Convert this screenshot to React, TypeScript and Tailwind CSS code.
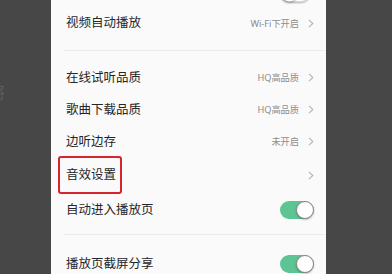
import { ReactNode } from "react";

const FONT = { fontFamily: '"Noto Sans", "Noto Sans CJK SC", sans-serif' };

const Chevron = () => (
  <svg width="6" height="9" viewBox="0 0 6 9" className="shrink-0">
    <polyline points="1,0.8 4.8,4.5 1,8.2" fill="none" stroke="#b4b4b4" strokeWidth="1.1" />
  </svg>
);

const Toggle = ({ on }: { on: boolean }) =>
  on ? (
    <div className="relative h-[18px] w-[34px] rounded-full bg-[#5cc593]">
      <div className="absolute right-0 top-1/2 h-[18px] w-[18px] -translate-y-1/2 rounded-full border border-[#8a8a8a] bg-white shadow-[0_1px_2px_rgba(0,0,0,0.25)]" />
    </div>
  ) : (
    <div className="relative h-[18px] w-[30px] rounded-full border border-[#dcdcdc] bg-white shadow-[0_1px_2px_rgba(0,0,0,0.3)]">
      <div className="absolute left-0 top-1/2 h-[17px] w-[17px] -translate-y-1/2 rounded-full bg-white shadow-[0_1px_2px_rgba(0,0,0,0.35)]" />
    </div>
  );

const Row = ({
  label,
  value,
  arrow,
  toggle,
  h,
}: {
  label: ReactNode;
  value?: string;
  arrow?: boolean;
  toggle?: boolean;
  h: string;
}) => (
  <div className={`flex shrink-0 items-center justify-between pl-[15px] pr-[12px] ${h}`}>
    <span className="text-[12.5px] leading-none text-[#262626]">{label}</span>
    <div className="flex items-center gap-[9px]">
      {value && <span className="text-[9.2px] leading-none text-[#8c8c8c]">{value}</span>}
      {arrow && <Chevron />}
      {toggle !== undefined && <Toggle on={toggle} />}
    </div>
  </div>
);

export default function App() {
  return (
    <div className="flex h-[274px] w-[392px] overflow-hidden bg-[#474747]" style={FONT}>
      {/* dimmed page behind the sheet */}
      <div className="relative w-[51px] shrink-0 overflow-hidden">
        <span className="absolute left-[-10px] top-[85px] text-[15px] leading-none text-[#5d5d5d]">将</span>
      </div>

      <div className="flex w-[275px] shrink-0 flex-col bg-[#fafafa]">
        <div className="-mt-[21px] flex flex-col">
          <div className="flex h-[28px] shrink-0 items-center justify-end pr-[16px]">
            <Toggle on={false} />
          </div>
          <Row label="视频自动播放" value="Wi-Fi下开启" arrow h="h-[33px]" />
        </div>

        <div className="mt-[10px] ml-[13px] h-px shrink-0 bg-[#ececec]" />

        <div className="flex flex-col pt-[11px]">
          <Row label="在线试听品质" value="HQ高品质" arrow h="h-[32px]" />
          <Row label="歌曲下载品质" value="HQ高品质" arrow h="h-[32px]" />
          <Row label="边听边存" value="未开启" arrow h="h-[32px]" />
          <Row
            label={
              <span className="relative">
                音效设置
                <span className="absolute -left-[8px] -right-[6px] -top-[10px] -bottom-[11px] rounded-[3px] border-2 border-[#d6262c]" />
              </span>
            }
            arrow
            h="h-[34px]"
          />
          <Row label="自动进入播放页" toggle h="h-[36px]" />
        </div>

        <div className="mt-[6px] ml-[13px] h-px shrink-0 bg-[#ececec]" />

        <div className="flex flex-col pt-[11px]">
          <Row label="播放页截屏分享" toggle h="h-[36px]" />
        </div>
      </div>

      <div className="flex-1" />
    </div>
  );
}
